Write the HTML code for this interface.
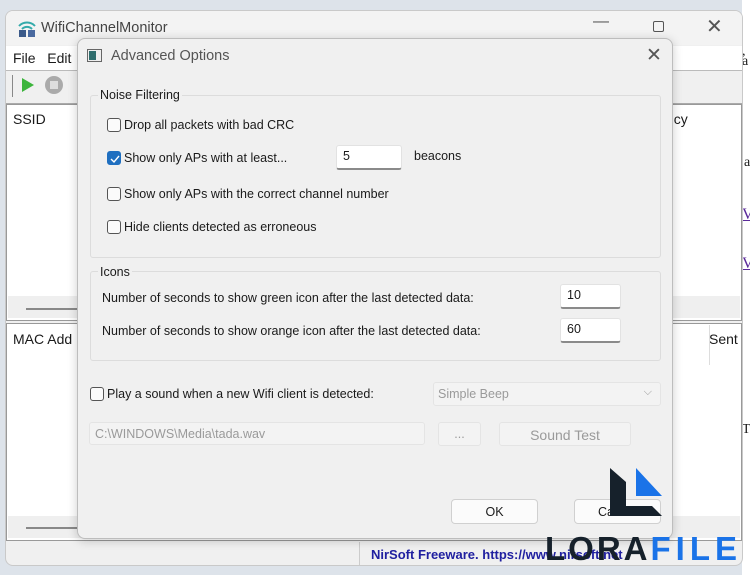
<!DOCTYPE html>
<html><head><meta charset="utf-8"><style>
*{box-sizing:border-box;margin:0;padding:0}
body{width:750px;height:575px;position:relative;overflow:hidden;background:#dde3ea;font-family:"Liberation Sans",sans-serif;font-size:12.5px;color:#1a1a1a}
.a{position:absolute}
.cb{position:absolute;width:14px;height:14px;border:1px solid #555;border-radius:3px;background:#fbfbfb}
.cb.on{background:#1f6fc0;border-color:#1f6fc0}
.inp{position:absolute;background:#fff;border:1px solid #e2e2e2;border-bottom:2px solid #8a8a8a;border-radius:3px;padding:3px 6px}
.grp{position:absolute;border:1px solid #dcdcdc;border-radius:3px}
.btn{position:absolute;background:#fbfbfb;border:1px solid #d0d0d0;border-radius:4px;text-align:center}
.dis{background:#f3f3f3;border:1px solid #e4e4e4;color:#9a9a9a;border-radius:3px}
</style></head><body>
<div class="a" style="left:742px;top:0;width:8px;height:575px;background:#fff"></div>
<div class="a" style="left:742px;top:44px;font-family:'Liberation Serif';font-size:14px">,</div>
<div class="a" style="left:742px;top:54px;font-family:'Liberation Serif';font-size:14px">a</div>
<div class="a" style="left:744px;top:155px;font-family:'Liberation Serif';font-size:14px">a</div>
<div class="a" style="left:742px;top:206px;font-family:'Liberation Serif';font-size:16px;color:#5a2a9a;text-decoration:underline">V</div>
<div class="a" style="left:742px;top:255px;font-family:'Liberation Serif';font-size:16px;color:#5a2a9a;text-decoration:underline">V</div>
<div class="a" style="left:742px;top:422px;font-family:'Liberation Serif';font-size:14px">T</div>
<div class="a" style="left:5px;top:10px;width:738px;height:556px;background:#f0f0f0;border:1px solid #c9c9c9;border-radius:8px;overflow:hidden">
  <div class="a" style="left:0;top:0;width:738px;height:34px;background:#f3f3f3"></div>
  <svg class="a" style="left:10px;top:6px" width="22" height="22" viewBox="0 0 22 22"><path d="M3 9a11 11 0 0 1 16 0M6 12a7 7 0 0 1 10 0" stroke="#3aa" stroke-width="2" fill="none"/><rect x="3" y="13" width="7" height="7" fill="#3b5a8a"/><rect x="12" y="13" width="7" height="7" fill="#4a6aa0"/></svg>
  <div class="a" style="left:35px;top:9px;font-size:14.5px;color:#444">WifiChannelMonitor</div>
  <div class="a" style="left:587px;top:2px;font-size:16px;color:#555">—</div>
  <div class="a" style="left:647px;top:10px;width:11px;height:11px;border:1px solid #555;border-radius:2px"></div>
  <div class="a" style="left:700px;top:3px;font-size:20px;color:#555">✕</div>
  <div class="a" style="left:0;top:35px;width:738px;height:24px;background:#fff"></div>
  <div class="a" style="left:7px;top:39px;font-size:14px">File&nbsp;&nbsp; Edit</div>
  <div class="a" style="left:0;top:59px;width:738px;height:1px;background:#bbb"></div>
  <div class="a" style="left:6px;top:64px;width:1px;height:22px;background:#888"></div>
  <svg class="a" style="left:14px;top:65px" width="16" height="18"><path d="M2 2L14 9L2 16Z" fill="#3cb53c"/></svg>
  <div class="a" style="left:39px;top:65px;width:18px;height:18px;border-radius:50%;background:#aaa"><div class="a" style="left:5px;top:5px;width:8px;height:8px;background:#ddd"></div></div>
  <div class="a" style="left:0;top:92px;width:737px;height:1px;background:#aaa"></div>
  <div class="a" style="left:0;top:93px;width:736px;height:217px;background:#fff;border:1px solid #999"></div>
  <div class="a" style="left:7px;top:100px;font-size:14px">SSID</div>
  <div class="a" style="left:660px;top:100px;font-size:14px">ncy</div>
  <div class="a" style="left:2px;top:285px;width:732px;height:22px;background:#efefef"></div>
  <div class="a" style="left:20px;top:297px;width:60px;height:2px;background:#888"></div>
  <div class="a" style="left:0;top:312px;width:736px;height:218px;background:#fff;border:1px solid #999"></div>
  <div class="a" style="left:7px;top:320px;font-size:14px">MAC Add</div>
  <div class="a" style="left:703px;top:320px;font-size:14px">Sent</div>
  <div class="a" style="left:703px;top:314px;width:1px;height:40px;background:#ddd"></div>
  <div class="a" style="left:2px;top:505px;width:732px;height:22px;background:#efefef"></div>
  <div class="a" style="left:20px;top:516px;width:60px;height:2px;background:#888"></div>
  <div class="a" style="left:353px;top:531px;width:1px;height:25px;background:#ccc"></div>
  <div class="a" style="left:365px;top:536px;font-size:13px;font-weight:bold;color:#2020a0">NirSoft Freeware. https://www.nirsoft.net</div>
</div>
<div class="a" style="left:77px;top:38px;width:596px;height:501px;background:#f0f0f0;border:1px solid #bdbdbd;border-radius:8px;box-shadow:0 2px 10px rgba(0,0,0,.2)">
  <div class="a" style="left:9px;top:10px;width:15px;height:13px;border:1px solid #666;background:#eee"><div class="a" style="left:1px;top:1px;width:7px;height:9px;background:#2e6d6d"></div></div>
  <div class="a" style="left:33px;top:9px;font-size:14.5px;color:#555">Advanced Options</div>
  <div class="a" style="left:568px;top:5px;font-size:19px;color:#555">✕</div>
  <div class="grp" style="left:12px;top:56px;width:571px;height:163px"></div>
  <div class="a" style="left:20px;top:49px;background:#f0f0f0;padding:0 2px">Noise Filtering</div>
  <div class="cb" style="left:29px;top:79px"></div><div class="a" style="left:46px;top:79px">Drop all packets with bad CRC</div>
  <div class="cb on" style="left:29px;top:112px"><svg class="a" style="left:1px;top:1px" width="11" height="11"><path d="M2 6l3 3l5-6" stroke="#fff" stroke-width="1.4" fill="none"/></svg></div><div class="a" style="left:46px;top:112px">Show only APs with at least...</div>
  <div class="inp" style="left:258px;top:106px;width:66px;height:25px">5</div>
  <div class="a" style="left:336px;top:110px">beacons</div>
  <div class="cb" style="left:29px;top:148px"></div><div class="a" style="left:46px;top:148px">Show only APs with the correct channel number</div>
  <div class="cb" style="left:29px;top:181px"></div><div class="a" style="left:46px;top:181px">Hide clients detected as erroneous</div>
  <div class="grp" style="left:12px;top:232px;width:571px;height:90px"></div>
  <div class="a" style="left:20px;top:226px;background:#f0f0f0;padding:0 2px">Icons</div>
  <div class="a" style="left:24px;top:252px">Number of seconds to show green icon after the last detected data:</div>
  <div class="inp" style="left:482px;top:245px;width:61px;height:25px">10</div>
  <div class="a" style="left:24px;top:285px">Number of seconds to show orange icon after the last detected data:</div>
  <div class="inp" style="left:482px;top:279px;width:61px;height:25px">60</div>
  <div class="cb" style="left:12px;top:348px"></div><div class="a" style="left:29px;top:348px">Play a sound when a new Wifi client is detected:</div>
  <div class="a dis" style="left:355px;top:343px;width:228px;height:24px;padding:4px 4px">Simple Beep<span style="position:absolute;right:8px;top:3px;font-size:11px">⌵</span></div>
  <div class="a dis" style="left:11px;top:383px;width:336px;height:23px;padding:4px 5px">C:\WINDOWS\Media\tada.wav</div>
  <div class="a dis" style="left:360px;top:383px;width:43px;height:24px;text-align:center;padding-top:4px">...</div>
  <div class="a dis" style="left:421px;top:383px;width:132px;height:24px;text-align:center;padding-top:4px;font-size:14px">Sound Test</div>
  <div class="btn" style="left:373px;top:460px;width:87px;height:25px;padding-top:5px">OK</div>
  <div class="btn" style="left:496px;top:460px;width:87px;height:25px;padding-top:5px">Cancel</div>
</div>
<svg class="a" style="left:608px;top:466px" width="56" height="58"><path d="M2 2L18 16V40H44L54 50H2Z" fill="#16212b"/><path d="M28 2L54 30H28Z" fill="#1a73e8"/></svg>
<div class="a" style="left:545px;top:532px;font-size:33px;font-weight:bold;letter-spacing:3px;line-height:1;color:#16212b;white-space:nowrap">LORA<span style="color:#1a73e8;letter-spacing:5px">FILE</span></div>
</body></html>
